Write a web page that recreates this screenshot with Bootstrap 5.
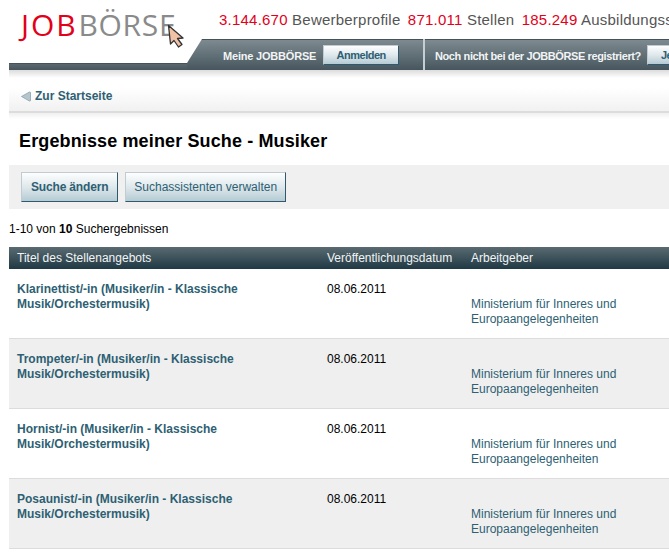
<!DOCTYPE html>
<html lang="de">

<head>
    <meta charset="UTF-8">
    <meta name="viewport" content="width=device-width, initial-scale=1.0">
    <title>JOBBÖRSE - Ergebnisse meiner Suche</title>
    <link rel="stylesheet" href="https://cdn.jsdelivr.net/npm/bootstrap@5.3.2/dist/css/bootstrap.min.css">
    <script src="https://cdn.jsdelivr.net/npm/bootstrap@5.3.2/dist/js/bootstrap.bundle.min.js"></script>

    <style>
        html, body { overflow: hidden; }
        body {
            font-family: "Liberation Sans", Arial, sans-serif;
            font-size: 12px;
            line-height: 15px;
            color: #000;
            margin: 0;
        }
        .jb-page { margin-left: 9px; width: 900px; }
        .jb-head { height: 39px; position: relative; }
        .jb-logo {
            font-family: "Open Sans", sans-serif;
            font-weight: 400;
            font-size: 30px;
            line-height: 30px;
            letter-spacing: .7px;
            padding: 10px 0 0 12px;
            width: 210px;
            color: #8a8a8a;
            white-space: nowrap;
        }
        .jb-logo b { font-weight: 400; color: #e2001a; margin-right: 1px; letter-spacing: 1.9px; }
        .jb-cursor { position: absolute; left: 158px; top: 24px; }
        .jb-stats { font-size: 15px; line-height: 18px; padding-top: 11px; color: #555; white-space: nowrap; letter-spacing: .22px; }
        .jb-stats span { margin-right: 3px; }
        .jb-stats b { font-weight: 400; color: #e2001a; }
        .jb-bar {
            height: 31px;
            background: linear-gradient(transparent 24px, #2f3d44 24px, #5a676e 25px, #47565e 31px);
        }
        .jb-tab {
            margin-left: 178px;
            width: 722px;
            clip-path: polygon(15px 0, 100% 0, 100% 100%, 0 100%, 0 24px);
            background: linear-gradient(#45525a 0, #45525a 1px, #7d8a90 1px, #47565e 100%);
            color: #f2f4f5;
            font-size: 11px;
            font-weight: 700;
        }
        .jb-seg { white-space: nowrap; padding-top: 6px; height: 31px; }
        .jb-seg-login { padding-left: 36px; width: 238px; border-right: 2px solid #c5ced2; letter-spacing: -.2px; column-gap: 7px; }
        .jb-seg-reg { padding-left: 10px; letter-spacing: -.4px; column-gap: 6px; }
        .jb-btn {
            border-radius: 0;
            font-family: inherit;
            font-weight: 400;
            color: #2e5f73;
            border: 1px solid;
            border-color: #c2ccd0 #2f5a6d #2f5a6d #c2ccd0;
            background: linear-gradient(#fdfefe, #dfe8ec 50%, #b5cbd4);
        }
        .jb-seg .jb-btn { font-size: 11px; font-weight: 700; padding: 0; height: 20px; line-height: 18px; width: 76px; letter-spacing: -.5px; }
        .jb-seg .jb-btn-wide { width: auto; padding: 0 13px; }
        .jb-bar-shadow { height: 8px; background: linear-gradient(#dcdcdc, #fff); }
        .jb-back {
            height: 35px;
            padding: 11px 0 0 12px;
            background: linear-gradient(#fff 30%, #f1f1f1);
            border-bottom: 2px solid #dcdcdc;
        }
        .jb-back-shadow { height: 6px; background: linear-gradient(#f0f0f0, #fff); }
        .jb-back a, .jb-job { color: #2e5f73; font-weight: 700; text-decoration: none; }
        .jb-title { font-size: 18px; line-height: 22px; font-weight: 700; margin: 11px 0 13px 10px; color: #000; letter-spacing: .13px; }
        .jb-tools { background: #f0f0f0; height: 44px; padding: 7px 12px; column-gap: 7px; }
        .jb-tools .jb-btn { font-size: 12px; height: 30px; padding: 0 8px; line-height: 28px; }
        .jb-tools .jb-main { font-weight: 700; letter-spacing: -.17px; padding: 0 9px; }
        .jb-count { margin: 13px 0 10px; }
        .jb-table { table-layout: fixed; width: 900px; margin: 0; font-size: 12px; line-height: 15px; border-collapse: separate; border-spacing: 0; }
        .jb-table > thead > tr > th {
            background: linear-gradient(#5a6a71, #1f3944);
            color: #f2f4f5;
            font-weight: 400;
            height: 22px;
            padding: 0 8px;
            vertical-align: middle;
            border: 0;
            box-shadow: none;
        }
        .jb-table > tbody > tr > td {
            height: 70px;
            padding: 13px 8px 0;
            vertical-align: top;
            background: transparent;
            color: #000;
            box-shadow: none;
            border-bottom: 1px solid #dcdcdc;
        }
        .jb-table > tbody > tr:nth-child(even) > td { background: #efefef; }
        .jb-col-title { width: 310px; }
        .jb-col-date { width: 144px; }
        .jb-job { display: block; width: 240px; }
        .jb-employer { display: block; width: 175px; margin-top: 15px; color: #2e5f73; text-decoration: none; }
    </style>
</head>

<body>
    <div class="jb-page">
        <!-- Kopfbereich -->
        <div class="jb-head d-flex">
            <div class="jb-logo"><b>JOB</b>BÖRSE</div>
            <svg class="jb-cursor" width="20" height="24" viewBox="0 0 20 24" aria-hidden="true">
                <path d="M1.5 1.5 L16 14 L10.5 14.5 L15 20.5 L11.5 23 L7 16.5 L3.5 20 Z" fill="#f1c3a6" stroke="#333" stroke-width="1.3" stroke-linejoin="round"/>
            </svg>
            <div class="jb-stats">
                <span><b>3.144.670</b> Bewerberprofile</span>
                <span><b>871.011</b> Stellen</span>
                <span><b>185.249</b> Ausbildungsstellen</span>
            </div>
        </div>
        <div class="jb-bar">
            <div class="jb-tab d-flex">
                <div class="jb-seg jb-seg-login d-flex align-items-start">
                    <span class="pt-1">Meine JOBBÖRSE</span>
                    <button class="btn jb-btn" type="button">Anmelden</button>
                </div>
                <div class="jb-seg jb-seg-reg d-flex align-items-start">
                    <span class="pt-1">Noch nicht bei der JOBBÖRSE registriert?</span>
                    <button class="btn jb-btn jb-btn-wide" type="button">Jetzt registrieren</button>
                </div>
            </div>
        </div>
        <div class="jb-bar-shadow"></div>

        <!-- Zurueck -->
        <div class="jb-back">
            <a href="#" class="d-inline-flex align-items-center gap-1">
                <svg width="10" height="11" viewBox="0 0 10 11" aria-hidden="true">
                    <path d="M.5 5.5 L8.5 1 Q9.5 .7 9.5 2 V9 Q9.5 10.3 8.5 10 Z" fill="#b4c5cd" stroke="#8aa1ac" stroke-width=".8"/>
                </svg>
                Zur Startseite
            </a>
        </div>
        <div class="jb-back-shadow"></div>

        <h1 class="jb-title">Ergebnisse meiner Suche - Musiker</h1>

        <div class="jb-tools d-flex">
            <button class="btn jb-btn jb-main" type="button">Suche ändern</button>
            <button class="btn jb-btn" type="button">Suchassistenten verwalten</button>
        </div>

        <div class="jb-count">1-10 von <strong>10</strong> Suchergebnissen</div>

        <table class="table jb-table">
            <thead>
                <tr>
                    <th class="jb-col-title">Titel des Stellenangebots</th>
                    <th class="jb-col-date">Veröffentlichungsdatum</th>
                    <th>Arbeitgeber</th>
                </tr>
            </thead>
            <tbody>
                <tr>
                    <td><a class="jb-job" href="#">Klarinettist/-in (Musiker/in - Klassische Musik/Orchestermusik)</a></td>
                    <td>08.06.2011</td>
                    <td><a class="jb-employer" href="#">Ministerium für Inneres und Europaangelegenheiten</a></td>
                </tr>
                <tr>
                    <td><a class="jb-job" href="#">Trompeter/-in (Musiker/in - Klassische Musik/Orchestermusik)</a></td>
                    <td>08.06.2011</td>
                    <td><a class="jb-employer" href="#">Ministerium für Inneres und Europaangelegenheiten</a></td>
                </tr>
                <tr>
                    <td><a class="jb-job" href="#">Hornist/-in (Musiker/in - Klassische Musik/Orchestermusik)</a></td>
                    <td>08.06.2011</td>
                    <td><a class="jb-employer" href="#">Ministerium für Inneres und Europaangelegenheiten</a></td>
                </tr>
                <tr>
                    <td><a class="jb-job" href="#">Posaunist/-in (Musiker/in - Klassische Musik/Orchestermusik)</a></td>
                    <td>08.06.2011</td>
                    <td><a class="jb-employer" href="#">Ministerium für Inneres und Europaangelegenheiten</a></td>
                </tr>
            </tbody>
        </table>
    </div>
</body>

</html>
